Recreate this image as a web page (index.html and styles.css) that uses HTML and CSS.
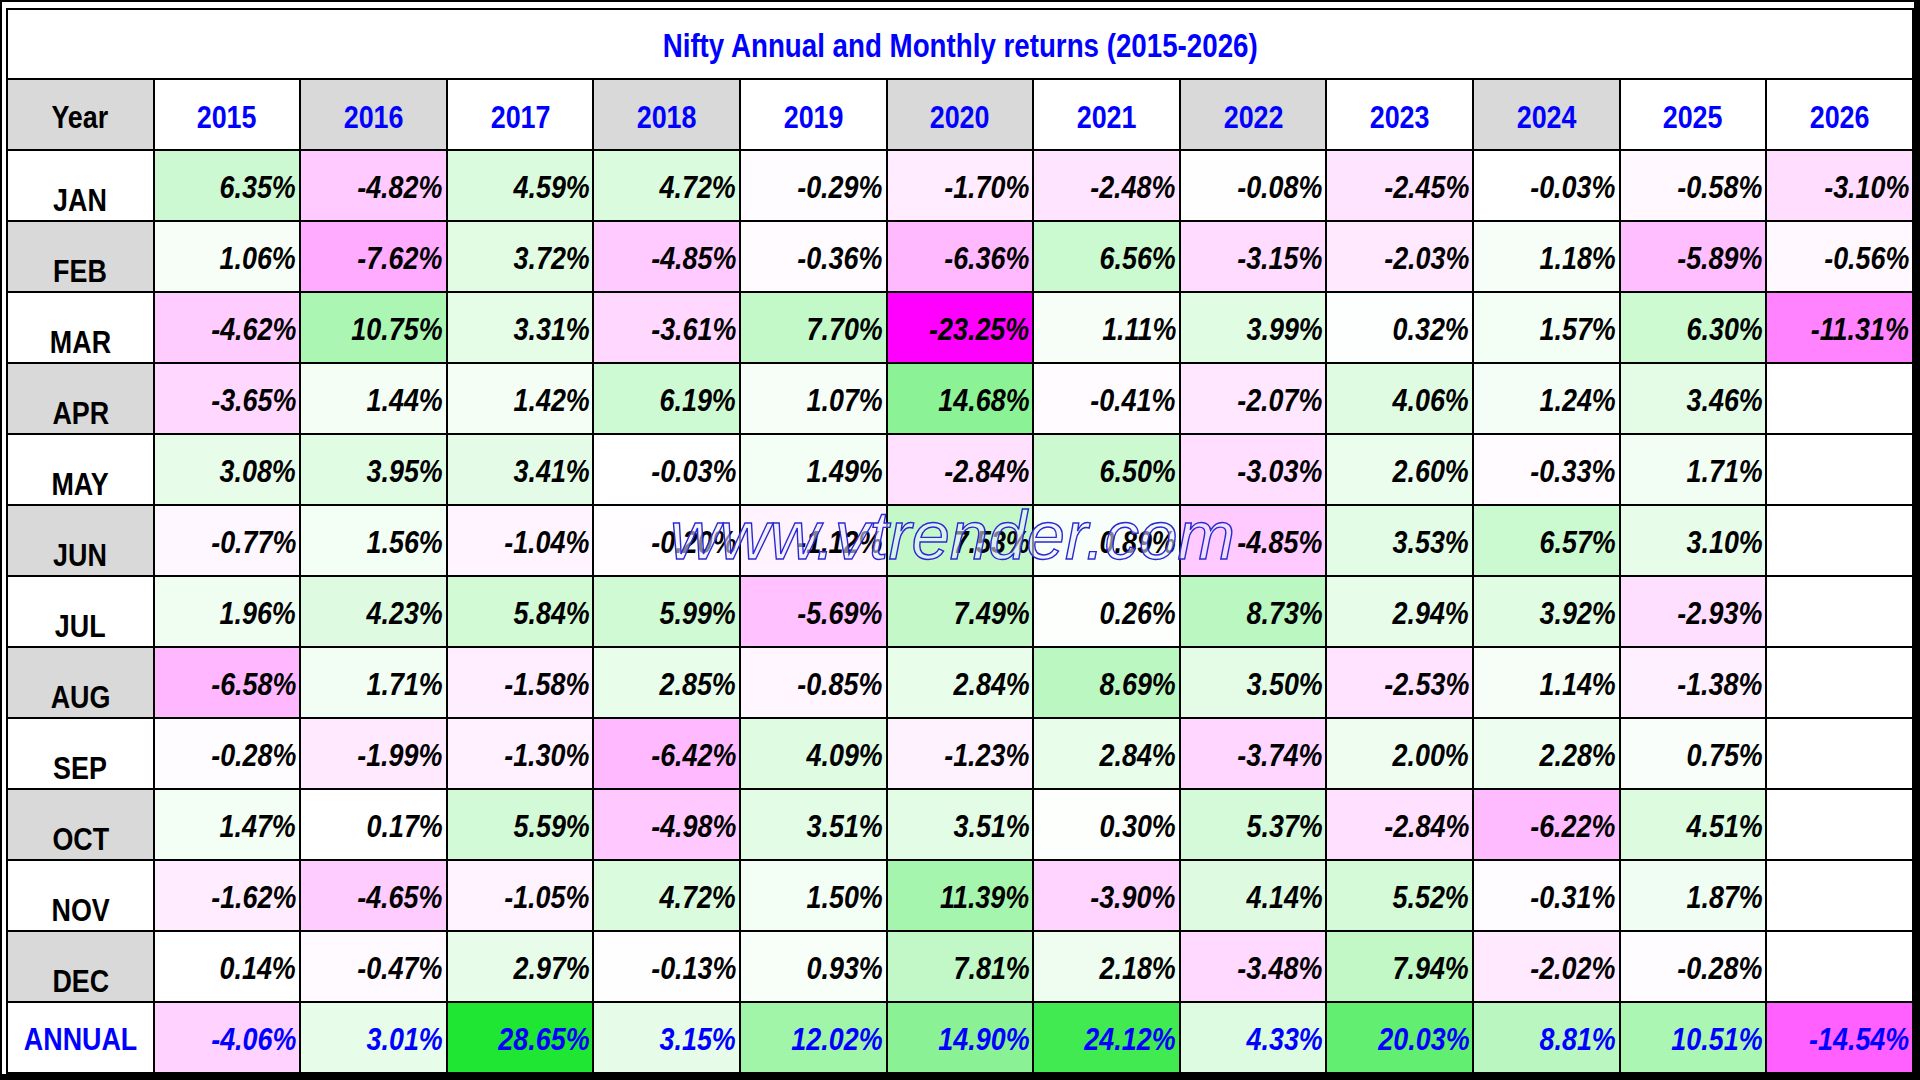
FILE: index.html
```html
<!DOCTYPE html>
<html lang="en">
<head>
<meta charset="utf-8">
<title>Nifty Annual and Monthly returns (2015-2026)</title>
<link rel="stylesheet" href="styles.css">
</head>
<body>
<div class="sheet">
<table class="grid">
<colgroup><col span="13"></colgroup>
<tr class="title-row"><td class="title" colspan="13"><span>Nifty Annual and Monthly returns (2015-2026)</span></td></tr>
<tr class="head-row">
<th class="lbl gray"><span>Year</span></th><th class="yr"><span>2015</span></th><th class="yr gray"><span>2016</span></th><th class="yr"><span>2017</span></th><th class="yr gray"><span>2018</span></th><th class="yr"><span>2019</span></th><th class="yr gray"><span>2020</span></th><th class="yr"><span>2021</span></th><th class="yr gray"><span>2022</span></th><th class="yr"><span>2023</span></th><th class="yr gray"><span>2024</span></th><th class="yr"><span>2025</span></th><th class="yr"><span>2026</span></th>
</tr>
<tr><th class="mon"><span>JAN</span></th><td class="v p" style="--v:6.35"><span>6.35%</span></td><td class="v n" style="--v:-4.82"><span>-4.82%</span></td><td class="v p" style="--v:4.59"><span>4.59%</span></td><td class="v p" style="--v:4.72"><span>4.72%</span></td><td class="v n" style="--v:-0.29"><span>-0.29%</span></td><td class="v n" style="--v:-1.70"><span>-1.70%</span></td><td class="v n" style="--v:-2.48"><span>-2.48%</span></td><td class="v n" style="--v:-0.08"><span>-0.08%</span></td><td class="v n" style="--v:-2.45"><span>-2.45%</span></td><td class="v n" style="--v:-0.03"><span>-0.03%</span></td><td class="v n" style="--v:-0.58"><span>-0.58%</span></td><td class="v n" style="--v:-3.10"><span>-3.10%</span></td></tr>
<tr><th class="mon gray"><span>FEB</span></th><td class="v p" style="--v:1.06"><span>1.06%</span></td><td class="v n" style="--v:-7.62"><span>-7.62%</span></td><td class="v p" style="--v:3.72"><span>3.72%</span></td><td class="v n" style="--v:-4.85"><span>-4.85%</span></td><td class="v n" style="--v:-0.36"><span>-0.36%</span></td><td class="v n" style="--v:-6.36"><span>-6.36%</span></td><td class="v p" style="--v:6.56"><span>6.56%</span></td><td class="v n" style="--v:-3.15"><span>-3.15%</span></td><td class="v n" style="--v:-2.03"><span>-2.03%</span></td><td class="v p" style="--v:1.18"><span>1.18%</span></td><td class="v n" style="--v:-5.89"><span>-5.89%</span></td><td class="v n" style="--v:-0.56"><span>-0.56%</span></td></tr>
<tr><th class="mon"><span>MAR</span></th><td class="v n" style="--v:-4.62"><span>-4.62%</span></td><td class="v p" style="--v:10.75"><span>10.75%</span></td><td class="v p" style="--v:3.31"><span>3.31%</span></td><td class="v n" style="--v:-3.61"><span>-3.61%</span></td><td class="v p" style="--v:7.70"><span>7.70%</span></td><td class="v n" style="--v:-23.25"><span>-23.25%</span></td><td class="v p" style="--v:1.11"><span>1.11%</span></td><td class="v p" style="--v:3.99"><span>3.99%</span></td><td class="v p" style="--v:0.32"><span>0.32%</span></td><td class="v p" style="--v:1.57"><span>1.57%</span></td><td class="v p" style="--v:6.30"><span>6.30%</span></td><td class="v n" style="--v:-11.31"><span>-11.31%</span></td></tr>
<tr><th class="mon gray"><span>APR</span></th><td class="v n" style="--v:-3.65"><span>-3.65%</span></td><td class="v p" style="--v:1.44"><span>1.44%</span></td><td class="v p" style="--v:1.42"><span>1.42%</span></td><td class="v p" style="--v:6.19"><span>6.19%</span></td><td class="v p" style="--v:1.07"><span>1.07%</span></td><td class="v p" style="--v:14.68"><span>14.68%</span></td><td class="v n" style="--v:-0.41"><span>-0.41%</span></td><td class="v n" style="--v:-2.07"><span>-2.07%</span></td><td class="v p" style="--v:4.06"><span>4.06%</span></td><td class="v p" style="--v:1.24"><span>1.24%</span></td><td class="v p" style="--v:3.46"><span>3.46%</span></td><td class="v"></td></tr>
<tr><th class="mon"><span>MAY</span></th><td class="v p" style="--v:3.08"><span>3.08%</span></td><td class="v p" style="--v:3.95"><span>3.95%</span></td><td class="v p" style="--v:3.41"><span>3.41%</span></td><td class="v n" style="--v:-0.03"><span>-0.03%</span></td><td class="v p" style="--v:1.49"><span>1.49%</span></td><td class="v n" style="--v:-2.84"><span>-2.84%</span></td><td class="v p" style="--v:6.50"><span>6.50%</span></td><td class="v n" style="--v:-3.03"><span>-3.03%</span></td><td class="v p" style="--v:2.60"><span>2.60%</span></td><td class="v n" style="--v:-0.33"><span>-0.33%</span></td><td class="v p" style="--v:1.71"><span>1.71%</span></td><td class="v"></td></tr>
<tr><th class="mon gray"><span>JUN</span></th><td class="v n" style="--v:-0.77"><span>-0.77%</span></td><td class="v p" style="--v:1.56"><span>1.56%</span></td><td class="v n" style="--v:-1.04"><span>-1.04%</span></td><td class="v n" style="--v:-0.20"><span>-0.20%</span></td><td class="v n" style="--v:-1.12"><span>-1.12%</span></td><td class="v p" style="--v:7.53"><span>7.53%</span></td><td class="v p" style="--v:0.89"><span>0.89%</span></td><td class="v n" style="--v:-4.85"><span>-4.85%</span></td><td class="v p" style="--v:3.53"><span>3.53%</span></td><td class="v p" style="--v:6.57"><span>6.57%</span></td><td class="v p" style="--v:3.10"><span>3.10%</span></td><td class="v"></td></tr>
<tr><th class="mon"><span>JUL</span></th><td class="v p" style="--v:1.96"><span>1.96%</span></td><td class="v p" style="--v:4.23"><span>4.23%</span></td><td class="v p" style="--v:5.84"><span>5.84%</span></td><td class="v p" style="--v:5.99"><span>5.99%</span></td><td class="v n" style="--v:-5.69"><span>-5.69%</span></td><td class="v p" style="--v:7.49"><span>7.49%</span></td><td class="v p" style="--v:0.26"><span>0.26%</span></td><td class="v p" style="--v:8.73"><span>8.73%</span></td><td class="v p" style="--v:2.94"><span>2.94%</span></td><td class="v p" style="--v:3.92"><span>3.92%</span></td><td class="v n" style="--v:-2.93"><span>-2.93%</span></td><td class="v"></td></tr>
<tr><th class="mon gray"><span>AUG</span></th><td class="v n" style="--v:-6.58"><span>-6.58%</span></td><td class="v p" style="--v:1.71"><span>1.71%</span></td><td class="v n" style="--v:-1.58"><span>-1.58%</span></td><td class="v p" style="--v:2.85"><span>2.85%</span></td><td class="v n" style="--v:-0.85"><span>-0.85%</span></td><td class="v p" style="--v:2.84"><span>2.84%</span></td><td class="v p" style="--v:8.69"><span>8.69%</span></td><td class="v p" style="--v:3.50"><span>3.50%</span></td><td class="v n" style="--v:-2.53"><span>-2.53%</span></td><td class="v p" style="--v:1.14"><span>1.14%</span></td><td class="v n" style="--v:-1.38"><span>-1.38%</span></td><td class="v"></td></tr>
<tr><th class="mon"><span>SEP</span></th><td class="v n" style="--v:-0.28"><span>-0.28%</span></td><td class="v n" style="--v:-1.99"><span>-1.99%</span></td><td class="v n" style="--v:-1.30"><span>-1.30%</span></td><td class="v n" style="--v:-6.42"><span>-6.42%</span></td><td class="v p" style="--v:4.09"><span>4.09%</span></td><td class="v n" style="--v:-1.23"><span>-1.23%</span></td><td class="v p" style="--v:2.84"><span>2.84%</span></td><td class="v n" style="--v:-3.74"><span>-3.74%</span></td><td class="v p" style="--v:2.00"><span>2.00%</span></td><td class="v p" style="--v:2.28"><span>2.28%</span></td><td class="v p" style="--v:0.75"><span>0.75%</span></td><td class="v"></td></tr>
<tr><th class="mon gray"><span>OCT</span></th><td class="v p" style="--v:1.47"><span>1.47%</span></td><td class="v p" style="--v:0.17"><span>0.17%</span></td><td class="v p" style="--v:5.59"><span>5.59%</span></td><td class="v n" style="--v:-4.98"><span>-4.98%</span></td><td class="v p" style="--v:3.51"><span>3.51%</span></td><td class="v p" style="--v:3.51"><span>3.51%</span></td><td class="v p" style="--v:0.30"><span>0.30%</span></td><td class="v p" style="--v:5.37"><span>5.37%</span></td><td class="v n" style="--v:-2.84"><span>-2.84%</span></td><td class="v n" style="--v:-6.22"><span>-6.22%</span></td><td class="v p" style="--v:4.51"><span>4.51%</span></td><td class="v"></td></tr>
<tr><th class="mon"><span>NOV</span></th><td class="v n" style="--v:-1.62"><span>-1.62%</span></td><td class="v n" style="--v:-4.65"><span>-4.65%</span></td><td class="v n" style="--v:-1.05"><span>-1.05%</span></td><td class="v p" style="--v:4.72"><span>4.72%</span></td><td class="v p" style="--v:1.50"><span>1.50%</span></td><td class="v p" style="--v:11.39"><span>11.39%</span></td><td class="v n" style="--v:-3.90"><span>-3.90%</span></td><td class="v p" style="--v:4.14"><span>4.14%</span></td><td class="v p" style="--v:5.52"><span>5.52%</span></td><td class="v n" style="--v:-0.31"><span>-0.31%</span></td><td class="v p" style="--v:1.87"><span>1.87%</span></td><td class="v"></td></tr>
<tr><th class="mon gray"><span>DEC</span></th><td class="v p" style="--v:0.14"><span>0.14%</span></td><td class="v n" style="--v:-0.47"><span>-0.47%</span></td><td class="v p" style="--v:2.97"><span>2.97%</span></td><td class="v n" style="--v:-0.13"><span>-0.13%</span></td><td class="v p" style="--v:0.93"><span>0.93%</span></td><td class="v p" style="--v:7.81"><span>7.81%</span></td><td class="v p" style="--v:2.18"><span>2.18%</span></td><td class="v n" style="--v:-3.48"><span>-3.48%</span></td><td class="v p" style="--v:7.94"><span>7.94%</span></td><td class="v n" style="--v:-2.02"><span>-2.02%</span></td><td class="v n" style="--v:-0.28"><span>-0.28%</span></td><td class="v"></td></tr>
<tr class="annual"><th class="mon ann"><span>ANNUAL</span></th><td class="v n" style="--v:-4.06"><span>-4.06%</span></td><td class="v p" style="--v:3.01"><span>3.01%</span></td><td class="v p" style="--v:28.65"><span>28.65%</span></td><td class="v p" style="--v:3.15"><span>3.15%</span></td><td class="v p" style="--v:12.02"><span>12.02%</span></td><td class="v p" style="--v:14.90"><span>14.90%</span></td><td class="v p" style="--v:24.12"><span>24.12%</span></td><td class="v p" style="--v:4.33"><span>4.33%</span></td><td class="v p" style="--v:20.03"><span>20.03%</span></td><td class="v p" style="--v:8.81"><span>8.81%</span></td><td class="v p" style="--v:10.51"><span>10.51%</span></td><td class="v n" style="--v:-14.54"><span>-14.54%</span></td></tr>
</table>
<div class="watermark">www.vtrender.com</div>
</div>
</body>
</html>
```
FILE: styles.css
```css
html, body {
  margin: 0;
  padding: 0;
}
body {
  background: #000;
  width: 1920px;
  height: 1080px;
  overflow: hidden;
  font-family: "Liberation Sans", Arial, sans-serif;
}
.sheet {
  position: relative;
  box-sizing: border-box;
  width: 1912px;
  height: 1072px;
  margin: 2px 0 0 2px;
  padding: 6px 0 0 4px;
  background: #fff;
}
.grid {
  width: 1908px;
  table-layout: fixed;
  border-collapse: separate;
  border-spacing: 0;
  border-top: 2px solid #000;
  border-left: 2px solid #000;
  background: #fff;
}
.grid td, .grid th {
  border-right: 2px solid #000;
  border-bottom: 2px solid #000;
  padding: 0;
  font-weight: bold;
  white-space: nowrap;
  overflow: hidden;
}
.grid span {
  display: inline-block;
  transform: scaleX(0.84);
  transform-origin: center center;
}
.grid tr { height: 71px; }
.grid tr.title-row { height: 70px; }
.title {
  text-align: center;
  vertical-align: middle;
  color: #0000ff;
  font-size: 33px;
  padding-top: 4px !important;
}
.head-row th {
  text-align: center;
  vertical-align: middle;
  font-size: 32px;
  background: #fff;
  padding-top: 5px !important;
}
.head-row th.gray { background: #d9d9d9; }
.lbl { color: #000; }
.yr { color: #0000ff; }
.mon {
  text-align: center;
  vertical-align: bottom;
  font-size: 32px;
  color: #000;
  padding-bottom: 1px !important;
  background: #fff;
}
.mon.gray { background: #d9d9d9; }
.mon.ann {
  color: #0000ff;
  vertical-align: middle;
  padding-bottom: 0 !important;
  padding-top: 4px !important;
}
.v {
  text-align: right;
  vertical-align: middle;
  font-style: italic;
  font-size: 32px;
  color: #000;
  padding-right: 3px !important;
  padding-top: 3px !important;
  background: #fff;
}
.v span { transform-origin: right center; }
.annual .v { color: #0000ff; }
.v.p {
  background: color-mix(in srgb, #1ee632 calc(var(--v) * 3.49%), #fff);
}
.v.n {
  background: color-mix(in srgb, #ff00ff calc(var(--v) * -4.30%), #fff);
}
.watermark {
  position: absolute;
  left: 668px;
  top: 499px;
  font-family: "Liberation Sans", Arial, sans-serif;
  font-style: italic;
  font-size: 69px;
  line-height: 1;
  color: rgba(236, 236, 255, 0.55);
  -webkit-text-stroke: 1.4px #2a2ad0;
  pointer-events: none;
  white-space: nowrap;
}
```
